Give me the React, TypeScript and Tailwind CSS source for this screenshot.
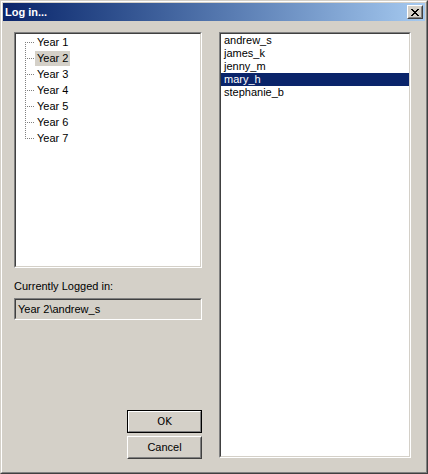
import React from "react";

const years = ["Year 1", "Year 2", "Year 3", "Year 4", "Year 5", "Year 6", "Year 7"];
const users = ["andrew_s", "james_k", "jenny_m", "mary_h", "stephanie_b"];

function Sunken({ className = "", bg = "bg-white", children }: { className?: string; bg?: string; children?: React.ReactNode }) {
  return (
    <div className={`border border-t-[#808080] border-l-[#808080] border-r-white border-b-white ${className}`}>
      <div className={`w-full h-full border border-t-[#404040] border-l-[#404040] border-r-[#D4D0C8] border-b-[#D4D0C8] ${bg}`}>
        {children}
      </div>
    </div>
  );
}

export default function App() {
  return (
    <div className="w-[428px] h-[474px] bg-[#D4D0C8] font-['Liberation_Sans',Arial,sans-serif] text-[11px] text-black leading-[13px]">
      <div className="w-full h-full border border-t-[#D4D0C8] border-l-[#D4D0C8] border-r-[#404040] border-b-[#404040]">
        <div className="w-full h-full border border-t-white border-l-white border-r-[#808080] border-b-[#808080] p-px flex flex-col">
          {/* Title bar */}
          <div className="h-[18px] flex items-center justify-between bg-gradient-to-r from-[#0A246A] to-[#A6CAF0] pl-[2px] pr-[2px]">
            <span className="text-white font-bold text-[11px]">Log in...</span>
            <div className="w-[16px] h-[14px] border border-t-white border-l-white border-r-[#404040] border-b-[#404040] bg-[#D4D0C8]">
              <div className="w-full h-full border border-t-[#D4D0C8] border-l-[#D4D0C8] border-r-[#808080] border-b-[#808080] flex items-center justify-center">
                <svg width="8" height="7" viewBox="0 0 8 7" shapeRendering="crispEdges">
                  <path d="M0 0h2v1H0zM6 0h2v1H6zM1 1h2v1H1zM5 1h2v1H5zM2 2h4v1H2zM3 3h2v1H3zM2 4h4v1H2zM1 5h2v1H1zM5 5h2v1H5zM0 6h2v1H0zM6 6h2v1H6z" fill="#000" />
                </svg>
              </div>
            </div>
          </div>
          {/* Content */}
          <div className="flex-1 flex pt-[11px] pl-[11px] pb-[12px]">
            <div className="w-[188px] flex flex-col">
              <Sunken className="h-[236px]">
                <div className="relative w-full h-full pt-0">
                  <svg className="absolute left-0 top-0" width="20" height="110" shapeRendering="crispEdges">
                    <line x1="9.5" y1="8" x2="9.5" y2="105" stroke="#808080" strokeDasharray="1 1" />
                    {years.map((_, i) => (
                      <line key={i} x1="10" y1={8.5 + 16 * i} x2="18" y2={8.5 + 16 * i} stroke="#808080" strokeDasharray="1 1" strokeDashoffset="1" />
                    ))}
                  </svg>
                  {years.map((y, i) => (
                    <div key={y} className="h-[16px] pl-[19px] flex items-center">
                      <span className={`h-[15px] leading-[15px] px-[2px] ${i === 1 ? "bg-[#D4D0C8]" : ""}`}>{y}</span>
                    </div>
                  ))}
                </div>
              </Sunken>
              <div className="mt-[12px] h-[13px]">Currently Logged in:</div>
              <Sunken className="mt-[5px] h-[22px]" bg="bg-[#D4D0C8]">
                <div className="h-full flex items-center pl-[2px]">Year 2\andrew_s</div>
              </Sunken>
              <div className="mt-auto self-end w-[75px] flex flex-col gap-[3px]">
                <div className="h-[23px] border border-black">
                  <div className="w-full h-full border border-t-white border-l-white border-r-[#808080] border-b-[#808080] flex items-center justify-center font-['DejaVu_Sans',sans-serif] text-[10px]">
                    OK
                  </div>
                </div>
                <div className="h-[23px] border border-t-white border-l-white border-r-[#404040] border-b-[#404040]">
                  <div className="w-full h-full border border-t-[#D4D0C8] border-l-[#D4D0C8] border-r-[#808080] border-b-[#808080] flex items-center justify-center">
                    Cancel
                  </div>
                </div>
              </div>
            </div>
            <Sunken className="ml-[17px] w-[192px] h-[426px]">
              <div className="w-full">
                {users.map((u, i) => (
                  <div key={u} className={`h-[13px] leading-[13px] pl-[3px] ${i === 3 ? "bg-[#0A246A] text-white" : ""}`}>{u}</div>
                ))}
              </div>
            </Sunken>
          </div>
        </div>
      </div>
    </div>
  );
}
